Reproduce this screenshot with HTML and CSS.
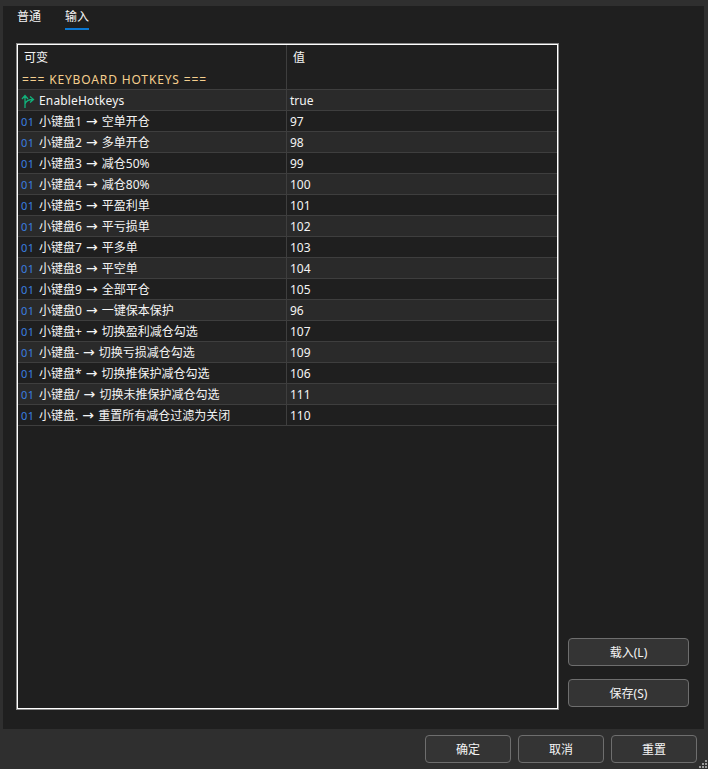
FILE: index.html
```html
<!DOCTYPE html>
<html lang="zh">
<head>
<meta charset="utf-8">
<title>输入</title>
<link rel="stylesheet" href="styles.css">
</head>
<body>
<div class="window">
  <main class="panel">
    <nav class="tabs">
      <span class="tab">普通</span>
      <span class="tab active">输入</span>
    </nav>
    <div class="content">
      <div class="table">
        <div class="head">
          <div class="cell name head-name">
            <span class="head-title">可变</span>
            <span class="section">=== KEYBOARD HOTKEYS ===</span>
          </div>
          <div class="cell value head-value">值</div>
        </div>
        <div class="row alt"><div class="cell name"><svg class="icon" width="16" height="16" viewBox="0 0 16 16"><path d="M5 15V3M2 6l3-3.500L8 6M5 11c1-3 3-4.500 8-4.500M10 3.500l3.500 3-3.500 3" fill="none" stroke="#12b07a" stroke-width="1.300"/></svg><span class="label latin">EnableHotkeys</span></div><div class="cell value">true</div></div>
        <div class="row"><div class="cell name"><span class="icon num">01</span><span class="label">小键盘1 <i class="arr">→</i> 空单开仓</span></div><div class="cell value">97</div></div>
        <div class="row alt"><div class="cell name"><span class="icon num">01</span><span class="label">小键盘2 <i class="arr">→</i> 多单开仓</span></div><div class="cell value">98</div></div>
        <div class="row"><div class="cell name"><span class="icon num">01</span><span class="label">小键盘3 <i class="arr">→</i> 减仓50%</span></div><div class="cell value">99</div></div>
        <div class="row alt"><div class="cell name"><span class="icon num">01</span><span class="label">小键盘4 <i class="arr">→</i> 减仓80%</span></div><div class="cell value">100</div></div>
        <div class="row"><div class="cell name"><span class="icon num">01</span><span class="label">小键盘5 <i class="arr">→</i> 平盈利单</span></div><div class="cell value">101</div></div>
        <div class="row alt"><div class="cell name"><span class="icon num">01</span><span class="label">小键盘6 <i class="arr">→</i> 平亏损单</span></div><div class="cell value">102</div></div>
        <div class="row"><div class="cell name"><span class="icon num">01</span><span class="label">小键盘7 <i class="arr">→</i> 平多单</span></div><div class="cell value">103</div></div>
        <div class="row alt"><div class="cell name"><span class="icon num">01</span><span class="label">小键盘8 <i class="arr">→</i> 平空单</span></div><div class="cell value">104</div></div>
        <div class="row"><div class="cell name"><span class="icon num">01</span><span class="label">小键盘9 <i class="arr">→</i> 全部平仓</span></div><div class="cell value">105</div></div>
        <div class="row alt"><div class="cell name"><span class="icon num">01</span><span class="label">小键盘0 <i class="arr">→</i> 一键保本保护</span></div><div class="cell value">96</div></div>
        <div class="row"><div class="cell name"><span class="icon num">01</span><span class="label">小键盘+ <i class="arr">→</i> 切换盈利减仓勾选</span></div><div class="cell value">107</div></div>
        <div class="row alt"><div class="cell name"><span class="icon num">01</span><span class="label">小键盘- <i class="arr">→</i> 切换亏损减仓勾选</span></div><div class="cell value">109</div></div>
        <div class="row"><div class="cell name"><span class="icon num">01</span><span class="label">小键盘* <i class="arr">→</i> 切换推保护减仓勾选</span></div><div class="cell value">106</div></div>
        <div class="row alt"><div class="cell name"><span class="icon num">01</span><span class="label">小键盘/ <i class="arr">→</i> 切换未推保护减仓勾选</span></div><div class="cell value">111</div></div>
        <div class="row"><div class="cell name"><span class="icon num">01</span><span class="label">小键盘. <i class="arr">→</i> 重置所有减仓过滤为关闭</span></div><div class="cell value">110</div></div>
      </div>
      <aside class="side">
        <button class="btn side-btn">载入(L)</button>
        <button class="btn side-btn">保存(S)</button>
      </aside>
    </div>
  </main>
  <footer class="footer">
    <button class="btn foot-btn">确定</button>
    <button class="btn foot-btn">取消</button>
    <button class="btn foot-btn">重置</button>
  </footer>
  <svg class="grip" width="9" height="9" viewBox="0 0 9 9"><path d="M6 0h2v2H6zM3 3h2v2H3zM6 3h2v2H6zM0 6h2v2H0zM3 6h2v2H3zM6 6h2v2H6z" fill="#9a9a9a"/></svg>
</div>
</body>
</html>
```
FILE: styles.css
```css
* { box-sizing: border-box; }
html, body { margin: 0; height: 100%; }
body {
  background: #2f2f2f;
  color: #f4f4f4;
  font-family: "Noto Sans", "Noto Sans CJK SC", sans-serif;
  font-size: 12px;
  overflow: hidden;
}
.window {
  position: relative;
  height: 769px;
  padding: 6px 4px 0 3px;
  display: flex;
  flex-direction: column;
}
.panel {
  height: 723px;
  background: #1f1f1f;
  padding: 0 13px;
  display: flex;
  flex-direction: column;
}
.tabs { display: flex; gap: 24px; height: 37px; padding-left: 1px; }
.tab {
  height: 24px;
  line-height: 22px;
  border-bottom: 0 solid #0a78d4;
}
.tab.active { border-bottom-width: 2px; }
.content { display: flex; flex: 1; }
.table {
  width: 543px;
  height: 667px;
  border: 2px solid #fff;
  outline: 1px solid #8a8a8a;
  outline-offset: -1px;
  background: #1f1f1f;
  flex: none;
}
.head { display: flex; height: 45px; border-bottom: 1px solid #3e3e3e; }
.row { display: flex; height: 21px; border-bottom: 1px solid #3e3e3e; line-height: 22px; }
.row.alt { background: #2a2a2a; }
.cell.name {
  width: 269px;
  flex: none;
  border-right: 1px solid #3e3e3e;
  padding-left: 3px;
  display: flex;
  align-items: center;
  white-space: pre;
}
.row .cell.name { padding-top: 1px; }
.cell.value { padding-left: 3px; flex: 1; }
.head-name { flex-direction: column; align-items: flex-start !important; }
.head-title { padding-left: 3px; height: 25px; line-height: 25px; }
.section { color: #f5cf8e; height: 19px; line-height: 20px; letter-spacing: .86px; padding-left: 1px; }
.head-value { padding: 0 0 0 6px !important; line-height: 25px; }
.label { height: 20px; line-height: 20px; }
.label.latin { letter-spacing: .15px; }
.arr { font-family: "DejaVu Sans", sans-serif; font-size: 14px; font-style: normal; line-height: 1; margin: 0 1px; }
.icon { width: 18px; flex: none; }
svg.icon { margin-left: -2px; margin-right: 2px; }
.num { color: #3a7fe0; font-size: 11px; letter-spacing: .5px; }
.side {
  flex: 1;
  display: flex;
  flex-direction: column;
  justify-content: flex-end;
  align-items: flex-end;
  gap: 13px;
  padding: 0 2px 22px 0;
}
.btn {
  background: #343434;
  color: #f4f4f4;
  border: 1px solid #6e6e6e;
  border-radius: 4px;
  font: inherit;
  padding: 0;
  height: 28px;
}
.side-btn { width: 121px; }
.footer {
  flex: 1;
  display: flex;
  justify-content: flex-end;
  gap: 7px;
  padding: 6px 7px 0 0;
}
.foot-btn { width: 86px; }
.grip { position: absolute; right: 0; bottom: 0; }
```
